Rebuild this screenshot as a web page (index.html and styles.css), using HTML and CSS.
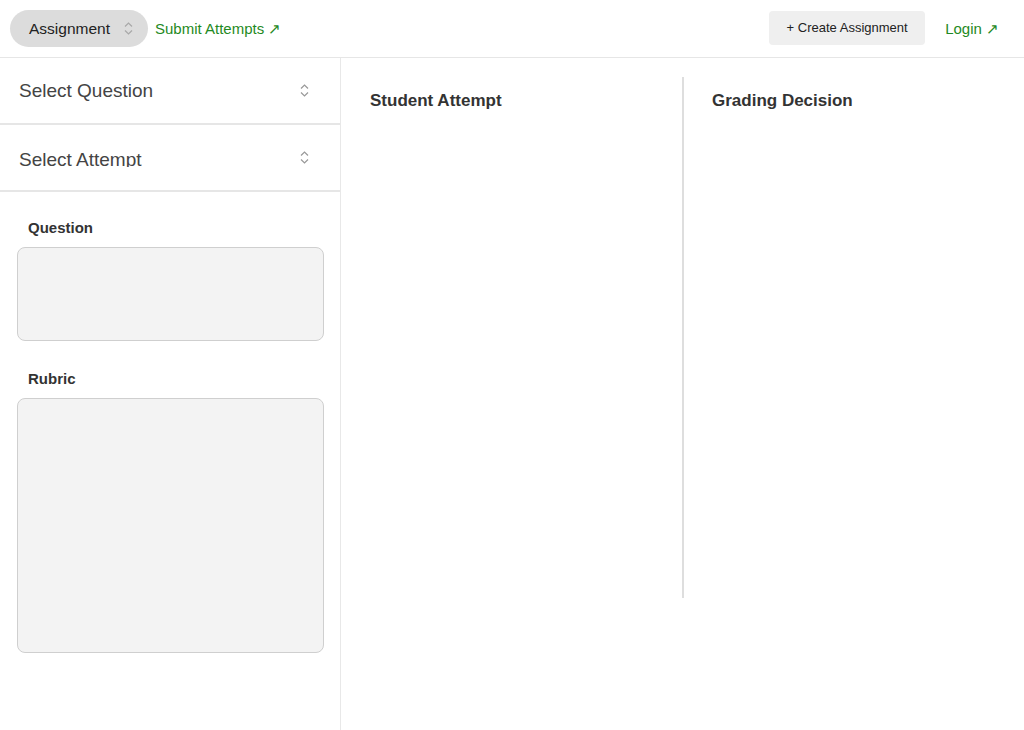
FILE: index.html
```html
<!DOCTYPE html>
<html>
<head>
<meta charset="utf-8">
<link rel="stylesheet" href="styles.css">
</head>
<body>
<header class="topbar">
  <div class="left">
    <div class="pill">
      <span class="pill-text">Assignment</span>
      <svg class="chev" width="9" height="13" viewBox="0 0 9 13"><path d="M1 4.5L4.5 1L8 4.5M1 8.5L4.5 12L8 8.5" fill="none" stroke="#a8a8a8" stroke-width="1.2"/></svg>
    </div>
    <a class="link">Submit Attempts ↗</a>
  </div>
  <div class="right">
    <button class="create">+ Create Assignment</button>
    <a class="link login">Login ↗</a>
  </div>
</header>
<div class="body">
  <aside class="sidebar">
    <div class="select-row">
      <span class="select-text">Select Question</span>
      <svg class="chev" width="9" height="13" viewBox="0 0 9 13"><path d="M1 4.5L4.5 1L8 4.5M1 8.5L4.5 12L8 8.5" fill="none" stroke="#999" stroke-width="1.2"/></svg>
    </div>
    <div class="select-row">
      <span class="select-text clipped">Select Attempt</span>
      <svg class="chev" width="9" height="13" viewBox="0 0 9 13"><path d="M1 4.5L4.5 1L8 4.5M1 8.5L4.5 12L8 8.5" fill="none" stroke="#999" stroke-width="1.2"/></svg>
    </div>
    <div class="fields">
      <div class="label q-label">Question</div>
      <div class="box q-box"></div>
      <div class="label r-label">Rubric</div>
      <div class="box r-box"></div>
    </div>
  </aside>
  <main class="main">
    <section class="col">
      <h2 class="col-title">Student Attempt</h2>
    </section>
    <section class="col col-right">
      <h2 class="col-title">Grading Decision</h2>
    </section>
  </main>
</div>
</body>
</html>
```
FILE: styles.css
```css
* { box-sizing: border-box; }
html, body { margin: 0; padding: 0; }
body {
  font-family: "Liberation Sans", Arial, sans-serif;
  background: #fff;
  color: #222;
  width: 1024px;
  height: 730px;
  overflow: hidden;
}
.topbar {
  height: 58px;
  border-bottom: 1px solid #e6e6e6;
  display: flex;
  align-items: center;
  justify-content: space-between;
  padding: 0 25px 0 10px;
}
.left, .right { display: flex; align-items: center; }
.pill {
  height: 37px;
  width: 138px;
  border-radius: 19px;
  background: #dcdcdc;
  display: flex;
  align-items: center;
  padding: 0 0 0 19px;
}
.pill-text { font-size: 15.5px; color: #222; width: 91px; }
.pill .chev { margin-left: 4px; }
.link {
  color: #1f8a24;
  font-size: 15px;
  margin-left: 7px;
  cursor: pointer;
}
.create {
  font-family: inherit;
  font-size: 13px;
  color: #222;
  background: #efefef;
  border: none;
  border-radius: 4px;
  width: 156px;
  height: 34px;
  padding: 0;
  margin-top: -2px;
}
.login { margin-left: 20px; font-size: 15px; }
.body { display: flex; height: 672px; }
.sidebar {
  width: 341px;
  border-right: 1px solid #e8e8e8;
  flex: none;
}
.select-row {
  height: 67px;
  border-bottom: 2px solid #e6e6e6;
  display: flex;
  align-items: center;
  justify-content: space-between;
  padding: 0 31px 0 19px;
}
.select-text { font-size: 19px; color: #444; }
.clipped {
  display: inline-block;
  height: 18px;
  line-height: 21px;
  overflow: hidden;
  margin-top: 1px;
}
.fields { padding: 0 16px 0 17px; }
.label {
  font-size: 15px;
  font-weight: bold;
  color: #333;
  padding-left: 11px;
  line-height: 17px;
}
.q-label { margin-top: 27px; }
.r-label { margin-top: 29px; }
.box {
  background: #f3f3f3;
  border: 1px solid #cfcfcf;
  border-radius: 8px;
  margin-top: 11px;
}
.q-box { height: 94px; }
.r-box { height: 255px; margin-top: 11px; }
.main {
  flex: 1;
  display: flex;
  padding-top: 19px;
}
.col { width: 341px; padding: 14px 0 0 29px; height: 521px; }
.col-right { flex: 1; border-left: 2px solid #dedede; padding-left: 28px; }
.col-title {
  margin: 0;
  font-size: 17px;
  font-weight: bold;
  color: #333;
  line-height: 20px;
}
```
